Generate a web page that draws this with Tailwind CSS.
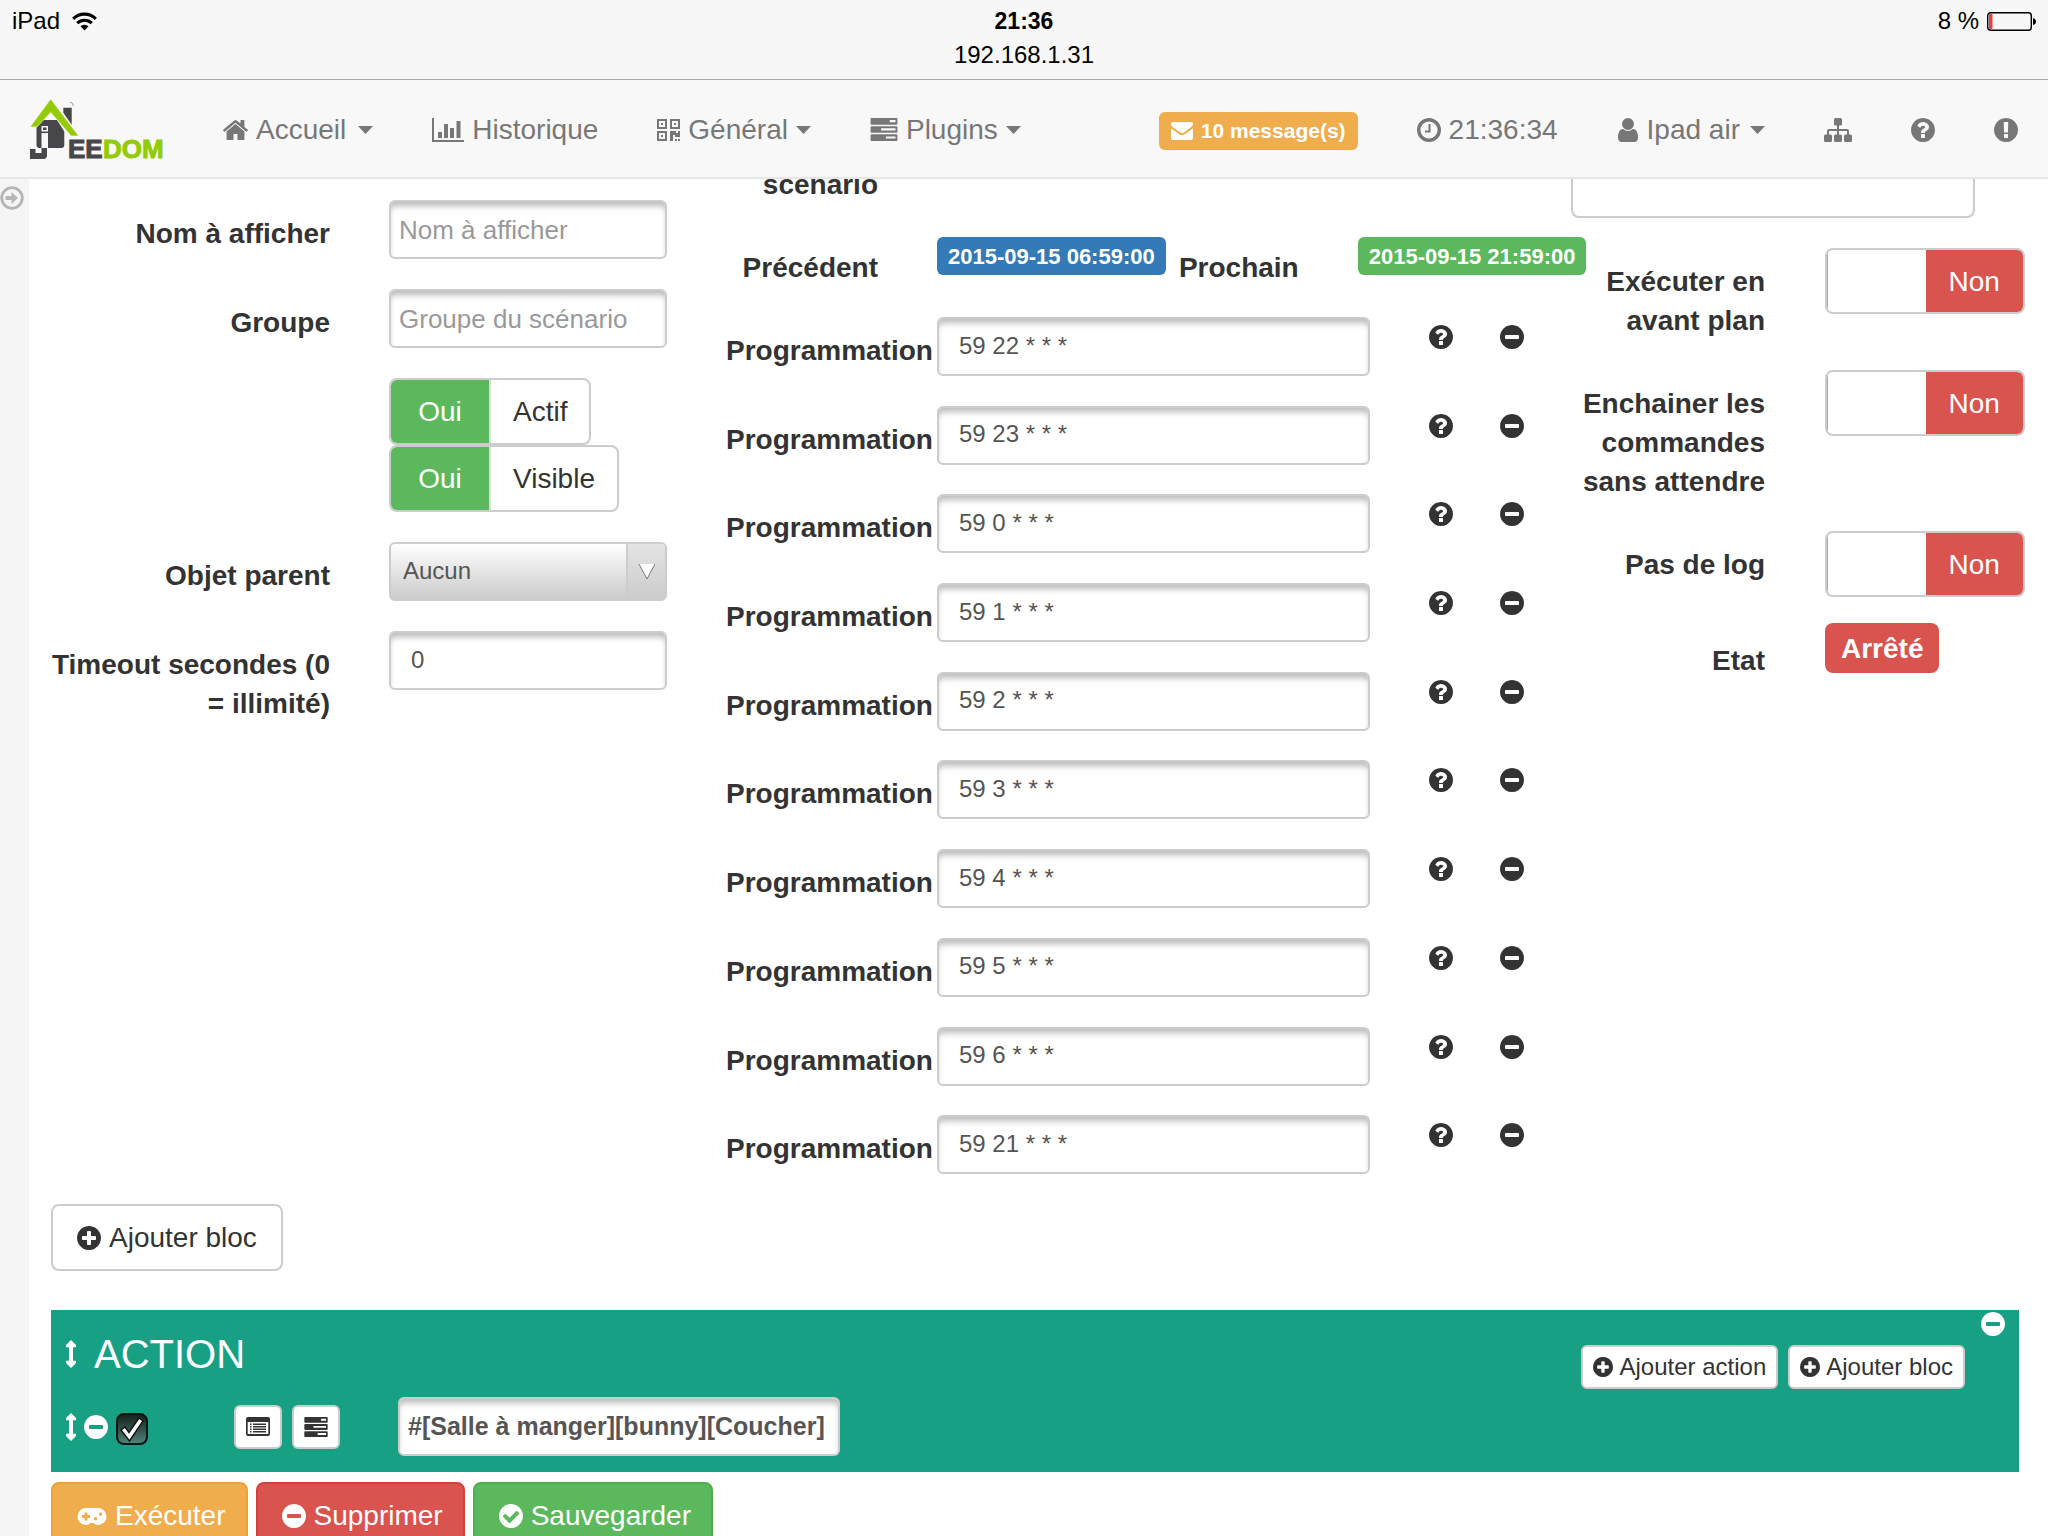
<!DOCTYPE html>
<html lang="fr">
<head>
<meta charset="utf-8">
<meta name="viewport" content="width=device-width, initial-scale=1">
<title>Jeedom - Scénario</title>
<script src="https://cdn.jsdelivr.net/npm/@tailwindcss/browser@4"></script>
</head>
<body class="flex h-screen flex-col overflow-hidden bg-white font-['Liberation_Sans',Arial,sans-serif] text-[28px] leading-[39px] text-[#333]">

<svg class="hidden" aria-hidden="true">
  <symbol id="question" viewBox="128 128 1536 1536"><path d="M1024 1376v-192q0-14-9-23t-23-9h-192q-14 0-23 9t-9 23v192q0 14 9 23t23 9h192q14 0 23-9t9-23zm256-672q0-88-55.5-163t-138.5-116-170-41q-243 0-371 213-15 24 8 42l132 100q7 6 19 6 16 0 25-12 53-68 86-92 34-24 86-24 48 0 85.5 26t37.5 59q0 38-20 61t-68 45q-63 28-115.5 86.5t-52.5 125.5v36q0 14 9 23t23 9h192q14 0 23-9t9-23q0-19 21.5-49.5t54.5-49.5q32-18 49-28.5t46-35 44.5-48 28-60.5 12.5-81zm384 192q0 209-103 385.5t-279.5 279.5-385.5 103-385.5-103-279.5-279.5-103-385.5 103-385.5 279.5-279.5 385.5-103 385.5 103 279.5 279.5 103 385.5z"/></symbol>
  <symbol id="minus" viewBox="128 128 1536 1536"><path d="M1344 960v-128q0-26-19-45t-45-19h-768q-26 0-45 19t-19 45v128q0 26 19 45t45 19h768q26 0 45-19t19-45zm320-64q0 209-103 385.5t-279.5 279.5-385.5 103-385.5-103-279.5-279.5-103-385.5 103-385.5 279.5-279.5 385.5-103 385.5 103 279.5 279.5 103 385.5z"/></symbol>
  <symbol id="plus" viewBox="128 128 1536 1536"><path d="M1344 960v-128q0-26-19-45t-45-19h-256v-256q0-26-19-45t-45-19h-128q-26 0-45 19t-19 45v256h-256q-26 0-45 19t-19 45v128q0 26 19 45t45 19h256v256q0 26 19 45t45 19h128q26 0 45-19t19-45v-256h256q26 0 45-19t19-45zm320-64q0 209-103 385.5t-279.5 279.5-385.5 103-385.5-103-279.5-279.5-103-385.5 103-385.5 279.5-279.5 385.5-103 385.5 103 279.5 279.5 103 385.5z"/></symbol>
  <symbol id="check" viewBox="128 128 1536 1536"><path d="M1412 734q0-28-18-46l-91-90q-19-19-45-19t-45 19l-408 407-226-226q-19-19-45-19t-45 19l-91 90q-18 18-18 46 0 27 18 45l362 362q19 19 45 19 27 0 46-19l543-543q18-18 18-45zm252 162q0 209-103 385.5t-279.5 279.5-385.5 103-385.5-103-279.5-279.5-103-385.5 103-385.5 279.5-279.5 385.5-103 385.5 103 279.5 279.5 103 385.5z"/></symbol>
  <symbol id="exclamation" viewBox="128 128 1536 1536"><path d="M896 128q209 0 385.5 103t279.5 279.5 103 385.5-103 385.5-279.5 279.5-385.5 103-385.5-103-279.5-279.5-103-385.5 103-385.5 279.5-279.5 385.5-103zm128 1247v-190q0-14-9-23.5t-22-9.5h-192q-13 0-23 10t-10 23v190q0 13 10 23t23 10h192q13 0 22-9.5t9-23.5zm-2-344l18-621q0-12-10-18-10-8-24-8h-220q-14 0-24 8-10 6-10 18l17 621q0 10 10 17.5t24 7.5h185q14 0 23.5-7.5t10.5-17.5z"/></symbol>
  <symbol id="user" viewBox="256 128 1280 1536"><path d="M1536 1399q0 109-62.5 187t-150.5 78h-854q-88 0-150.5-78t-62.5-187q0-85 8.5-160.5t31.5-152 58.5-131 94-89 134.5-34.5q131 128 313 128t313-128q76 0 134.5 34.5t94 89 58.5 131 31.5 152 8.5 160.5zm-256-887q0 159-112.5 271.5t-271.5 112.5-271.5-112.5-112.5-271.5 112.5-271.5 271.5-112.5 271.5 112.5 112.5 271.5z"/></symbol>
  <symbol id="home" viewBox="89 255 1614 1281"><path d="M1472 992v480q0 26-19 45t-45 19h-384v-384h-256v384h-384q-26 0-45-19t-19-45v-480q0-1 .5-3t.5-3l575-474 575 474q1 2 1 6zm223-69l-62 74q-8 9-21 11h-3q-13 0-21-7l-692-577-692 577q-12 8-24 7-13-2-21-11l-62-74q-8-10-7-23.5t11-21.5l719-599q32-26 76-26t76 26l244 204v-195q0-14 9-23t23-9h192q14 0 23 9t9 23v408l219 182q10 8 11 21.5t-7 23.5z"/></symbol>
  <symbol id="tasks" viewBox="0 0 28 24"><path fill-rule="evenodd" d="M1 0h26a1 1 0 0 1 1 1v5a1 1 0 0 1-1 1H1a1 1 0 0 1-1-1V1a1 1 0 0 1 1-1zM20 2.2v2.2h6V2.2zM1 8.5h26a1 1 0 0 1 1 1v5a1 1 0 0 1-1 1H1a1 1 0 0 1-1-1v-5a1 1 0 0 1 1-1zM11 10.8V13h15v-2.200zM1 17h26a1 1 0 0 1 1 1v5a1 1 0 0 1-1 1H1a1 1 0 0 1-1-1v-5a1 1 0 0 1 1-1zM16 19.300v2.200h10v-2.200z"/></symbol>
  <symbol id="caret" viewBox="0 0 15 8"><path d="M0 0h15L7.500 8z"/></symbol>
  <symbol id="updown" viewBox="0 0 10 28"><path d="M5 0l5 5v2.300H7v13.400h3V23l-5 5-5-5v-2.300h3V7.300H0V5z"/></symbol>
</svg>

<!-- Barre d'état -->
<div class="grid h-20 shrink-0 grid-cols-3 items-start border-b border-[#a9a9a9] bg-[#f7f7f7] px-3 pt-1 text-2xl leading-[34px] text-black">
  <div class="flex items-center gap-3">
    <span>iPad</span>
    <svg class="h-[19px] w-[25px]" viewBox="0 0 25 19" fill="none" stroke="#000" stroke-width="3.200"><path d="M1.200 6.800a16 16 0 0 1 22.600 0M5.200 11.200a10.500 10.500 0 0 1 14.600 0"/><path d="M12.500 18.500l-4-4.200a5.800 5.800 0 0 1 8 0z" fill="#000" stroke="none"/></svg>
  </div>
  <div class="text-center">
    <div class="text-[23px] font-bold">21:36</div>
    <div>192.168.1.31</div>
  </div>
  <div class="flex items-center justify-end gap-2">
    <span>8 %</span>
    <svg class="h-[19px] w-[49px]" viewBox="0 0 49 19"><rect x=".7" y=".7" width="43.600" height="17.600" rx="3" fill="none" stroke="#000" stroke-width="1.400"/><rect x="2" y="2" width="3.500" height="15" rx="1" fill="#e0433c"/><path d="M46 6q3 1 3 3.500T46 13z"/></svg>
  </div>
</div>

<!-- Navigation -->
<nav class="flex h-[99px] shrink-0 items-center border-b-2 border-[#e7e7e7] bg-[#f8f8f8] px-[30px] pt-0.5 text-[#777]">
  <a href="#" aria-label="Jeedom" class="mr-[57px]">
    <svg class="h-[62px] w-[136px] overflow-visible" viewBox="0 0 136 62">
      <path fill="#47464b" d="M33.300 8.700h8.400v17l-8.400-12zM11 21h16l7.300 11.500V46a3 3 0 0 1-3 3H18V45h-6v4H9.500a3 3 0 0 1-3-3V27z"/>
      <path fill="none" stroke="#999" d="M40 3q4 1 3 4"/>
      <path fill="#f8f8f8" d="M11.500 27h6.500v5.500h-6.500zM11.500 34h6.500v16h-6.500z"/>
      <path fill="#47464b" d="M13 28.500h3.500V31H13zM0 50h5.500v4h6V49H17v8.500L15 60H0z"/>
      <path fill="#93cb06" stroke="#f8f8f8" stroke-width=".6" d="M20.700 0l28 37h-7.500L20.700 13.500 7 28H0z"/>
      <text x="38" y="59" font-family="Liberation Sans" font-size="26" font-weight="bold" fill="#47464b" stroke="#47464b">EE</text>
      <text x="73" y="59" font-family="Liberation Sans" font-size="26" font-weight="bold" fill="#93cb06" stroke="#93cb06">DOM</text>
    </svg>
  </a>
  <div class="flex items-center gap-[59px]">
    <a href="#" class="flex items-center gap-2"><svg class="h-5 w-[25px]" fill="currentColor"><use href="#home"/></svg>Accueil<svg class="ml-1 h-2 w-[15px]" fill="currentColor"><use href="#caret"/></svg></a>
    <a href="#" class="flex items-center gap-2"><svg class="h-6 w-8" viewBox="0 0 32 24" fill="currentColor"><path d="M0 0h2v22h30v2H0zM6 14h4v6H6zM12 6h4v14h-4zM18 10h4v10h-4zM24.500 3h4v17h-4z"/></svg>Historique</a>
    <a href="#" class="flex items-center gap-2"><svg class="h-[22px] w-[23px]" viewBox="0 0 23 22" fill="currentColor"><path fill-rule="evenodd" d="M0 0h10v10H0zM2 2v6h6V2zM13 0h10v10H13zM15 2v6h6V2zM0 12h10v10H0zM2 14v6h6v-6zM4 4h2v2H4zM17 4h2v2h-2zM4 16h2v2H4zM13 12h6v2h2v-2h2v6h-5v-2h-2v6h-3zM18 20h2v2h-2zM21 20h2v2h-2z"/></svg>Général<svg class="h-2 w-[15px]" fill="currentColor"><use href="#caret"/></svg></a>
    <a href="#" class="flex items-center gap-2"><svg class="h-[23px] w-7" fill="currentColor"><use href="#tasks"/></svg>Plugins<svg class="h-2 w-[15px]" fill="currentColor"><use href="#caret"/></svg></a>
  </div>
  <div class="ml-auto flex items-center gap-[59px]">
    <a href="#" class="mt-0.5 flex h-[38px] items-center gap-2 rounded-md bg-[#f0ad4e] px-3 text-[21px] font-bold text-white"><svg class="h-[18px] w-[22px]" viewBox="0 0 22 18" fill="#fff"><path d="M2 0h18a2 2 0 0 1 2 2q0 1.500-1.500 2.800L13 10.500q-2 1.500-4 0L1.500 4.800Q0 3.500 0 2a2 2 0 0 1 2-2zM0 6.200l8 6q3 2.200 6 0l8-6V16a2 2 0 0 1-2 2H2a2 2 0 0 1-2-2z"/></svg>10 message(s)</a>
    <span class="flex items-center gap-2"><svg class="size-6" viewBox="0 0 24 24" fill="none" stroke="currentColor"><circle cx="12" cy="12" r="10.300" stroke-width="3.400"/><path d="M12.500 6v7.500H8" stroke-width="2"/></svg>21:36:34</span>
    <a href="#" class="flex items-center gap-2"><svg class="h-6 w-[22px]" fill="currentColor"><use href="#user"/></svg>Ipad air<svg class="ml-0.5 h-2 w-[15px]" fill="currentColor"><use href="#caret"/></svg></a>
    <a href="#" aria-label="Réseau"><svg class="h-6 w-7" viewBox="0 0 28 24" fill="currentColor"><path d="M11.500 0h5a1.500 1.500 0 0 1 1.500 1.500V6a1.500 1.500 0 0 1-1.500 1.500H15v3.500h8a2 2 0 0 1 2 2v3.500h1.500A1.500 1.500 0 0 1 28 18v4.500a1.500 1.500 0 0 1-1.500 1.500h-5a1.500 1.500 0 0 1-1.500-1.500V18a1.500 1.500 0 0 1 1.500-1.500H23V13h-8v3.500h1.500A1.500 1.500 0 0 1 18 18v4.500a1.500 1.500 0 0 1-1.500 1.500h-5a1.500 1.500 0 0 1-1.500-1.500V18a1.500 1.500 0 0 1 1.500-1.500H13V13H5v3.500h1.500A1.500 1.500 0 0 1 8 18v4.500A1.500 1.500 0 0 1 6.500 24h-5A1.500 1.500 0 0 1 0 22.500V18a1.500 1.500 0 0 1 1.500-1.500H3V13a2 2 0 0 1 2-2h8V7.500h-1.500A1.500 1.500 0 0 1 10 6V1.500A1.500 1.500 0 0 1 11.500 0z"/></svg></a>
    <a href="#" aria-label="Aide"><svg class="size-6" fill="currentColor"><use href="#question"/></svg></a>
    <a href="#" aria-label="Rapport"><svg class="size-6" fill="currentColor"><use href="#exclamation"/></svg></a>
  </div>
</nav>

<div class="flex min-h-0 flex-1 overflow-hidden">
  <aside class="w-[29px] shrink-0 bg-[#f5f5f5] pt-[7px]">
    <button type="button" aria-label="Ouvrir le menu" class="block"><svg class="size-6" viewBox="0 0 24 24"><circle cx="12" cy="12" r="10.300" fill="none" stroke="#b5b5b5" stroke-width="2.800"/><path fill="#b5b5b5" d="M5.500 10h6V6l6.500 6-6.500 6v-4h-6z"/></svg></button>
  </aside>

  <main class="min-w-0 flex-1">
    <form class="grid grid-cols-[minmax(0,686fr)_minmax(0,845fr)_minmax(0,454fr)] pl-[11px] pr-[23px]">

      <!-- Identité du scénario -->
      <div class="flex flex-col gap-[30px] pr-[59px] pt-[21px]">
        <div class="flex gap-[59px]">
          <label for="nom" class="w-[290px] shrink-0 pt-[14px] text-right font-bold">Nom à afficher</label>
          <input id="nom" type="text" placeholder="Nom à afficher" class="h-[59px] min-w-0 flex-1 rounded-md border-2 border-[#ccc] px-2 pt-0.5 text-[26px] shadow-[inset_0_6px_6px_-2px_#bbb] placeholder:text-[#999]">
        </div>
        <div class="flex gap-[59px]">
          <label for="groupe" class="w-[290px] shrink-0 pt-[14px] text-right font-bold">Groupe</label>
          <input id="groupe" type="text" placeholder="Groupe du scénario" class="h-[59px] min-w-0 flex-1 rounded-md border-2 border-[#ccc] px-2 pt-0.5 text-[26px] shadow-[inset_0_6px_6px_-2px_#bbb] placeholder:text-[#999]">
        </div>
        <div class="flex flex-col items-start pl-[349px]">
          <label class="relative flex h-[67px] overflow-hidden rounded-lg border-2 border-[#ccc]"><input type="checkbox" checked class="sr-only"><span class="flex w-[98px] items-center justify-center bg-[#5cb85c] text-white">Oui</span><span class="flex items-center border-l-2 border-[#ddd] px-[22px]">Actif</span></label>
          <label class="relative flex h-[67px] overflow-hidden rounded-lg border-2 border-[#ccc]"><input type="checkbox" checked class="sr-only"><span class="flex w-[98px] items-center justify-center bg-[#5cb85c] text-white">Oui</span><span class="flex items-center border-l-2 border-[#ddd] px-[22px]">Visible</span></label>
        </div>
        <div class="flex gap-[59px]">
          <label for="parent" class="w-[290px] shrink-0 pt-[14px] text-right font-bold">Objet parent</label>
          <div class="grid h-[59px] min-w-0 flex-1 items-stretch">
            <select id="parent" class="col-start-1 row-start-1 appearance-none rounded-md border-2 border-[#ccc] bg-linear-to-b from-white to-[#cbcbcb] px-3 pb-0.5 text-2xl text-[#555]"><option>Aucun</option></select>
            <span class="pointer-events-none col-start-1 row-start-1 m-0.5 flex w-[39px] items-center justify-center justify-self-end rounded-r-sm border-l-2 border-[#ccc] bg-linear-to-b from-[#e4e4e4] to-[#cbcbcb]"><svg class="h-4 w-[18px]" viewBox="0 0 18 16"><path d="M1 0h16L9 15z" fill="#fff"/><path d="M1 0l8 15L17 0" fill="none" stroke="#777"/></svg></span>
          </div>
        </div>
        <div class="flex gap-[59px]">
          <label for="timeout" class="w-[290px] shrink-0 pt-[14px] text-right font-bold">Timeout secondes (0 = illimité)</label>
          <input id="timeout" type="text" value="0" class="h-[59px] min-w-0 flex-1 rounded-md border-2 border-[#ccc] px-5 pb-0.5 text-2xl text-[#555] shadow-[inset_0_6px_6px_-2px_#bbb]">
        </div>
      </div>

      <!-- Programmation -->
      <div>
        <div class="-mt-[14px] mb-[30px] w-[152px] text-right font-bold">scénario</div>
        <div class="mb-[30px] flex whitespace-nowrap">
          <span class="w-[152px] shrink-0 pt-[14px] text-right font-bold">Précédent</span>
          <span class="ml-[59px] mt-[3px] flex h-[38px] shrink-0 items-center rounded-md bg-[#337ab7] px-[11px] text-[22px] font-bold text-white">2015-09-15 06:59:00</span>
          <span class="w-[133px] shrink-0 pt-[14px] text-right font-bold">Prochain</span>
          <span class="ml-[59px] mt-[3px] flex h-[38px] shrink-0 items-center rounded-md bg-[#5cb85c] px-[11px] text-[22px] font-bold text-white">2015-09-15 21:59:00</span>
        </div>
        <div id="schedules" class="grid h-[887px] auto-rows-fr"></div>
      </div>

      <!-- Options -->
      <div class="flex flex-col gap-[30px]">
        <textarea aria-label="Description" class="-mt-[80px] h-[119px] w-[404px] resize-none rounded-lg border-2 border-[#ccc]"></textarea>
        <div class="flex items-start gap-[60px]">
          <label for="avantplan" class="w-[194px] shrink-0 pt-[14px] text-right font-bold">Exécuter en avant plan</label>
          <label class="relative flex h-[66px] flex-1 overflow-hidden rounded-lg border-2 border-[#ccc]"><input id="avantplan" type="checkbox" class="sr-only"><span class="flex-1 border-l border-[#7cc67c]"></span><span class="flex flex-1 items-center justify-center bg-[#d9534f] text-white">Non</span></label>
        </div>
        <div class="flex items-start gap-[60px]">
          <label for="enchainer" class="w-[194px] shrink-0 pt-[14px] text-right font-bold">Enchainer les commandes sans attendre</label>
          <label class="relative flex h-[66px] flex-1 overflow-hidden rounded-lg border-2 border-[#ccc]"><input id="enchainer" type="checkbox" class="sr-only"><span class="flex-1 border-l border-[#7cc67c]"></span><span class="flex flex-1 items-center justify-center bg-[#d9534f] text-white">Non</span></label>
        </div>
        <div class="flex items-start gap-[60px]">
          <label for="paslog" class="w-[194px] shrink-0 pt-[14px] text-right font-bold">Pas de log</label>
          <label class="relative flex h-[66px] flex-1 overflow-hidden rounded-lg border-2 border-[#ccc]"><input id="paslog" type="checkbox" class="sr-only"><span class="flex-1 border-l border-[#7cc67c]"></span><span class="flex flex-1 items-center justify-center bg-[#d9534f] text-white">Non</span></label>
        </div>
        <div class="-mt-1 flex items-start gap-[60px]">
          <span class="w-[194px] shrink-0 pt-[18px] text-right font-bold">Etat</span>
          <span class="flex h-[50px] items-center rounded-lg bg-[#d9534f] px-4 font-bold text-white">Arrêté</span>
        </div>
      </div>
    </form>

    <div class="pl-[22px] pr-[29px]">
      <button type="button" class="flex h-[67px] items-center gap-2 rounded-lg border-2 border-[#ccc] px-6"><svg class="size-6" fill="currentColor"><use href="#plus"/></svg>Ajouter bloc</button>

      <section class="mt-[39px] flex h-[162px] justify-between bg-[#18a085] text-white">
        <div class="pl-[15px] pt-6">
          <h2 class="flex h-10 items-center gap-[18px] text-[40px]"><svg class="h-7 w-[10px]" fill="currentColor"><use href="#updown"/></svg>ACTION</h2>
          <div class="mt-[23px] flex h-[59px] items-center">
            <svg class="h-7 w-[10px]" fill="currentColor"><use href="#updown"/></svg>
            <button type="button" aria-label="Supprimer l'action" class="ml-2"><svg class="size-6" fill="currentColor"><use href="#minus"/></svg></button>
            <span class="ml-2 mt-1 grid size-8">
              <input type="checkbox" checked aria-label="Activer l'action" class="col-start-1 row-start-1 appearance-none rounded-lg border-2 border-[#0b1514] bg-linear-to-b from-[#16231f] to-[#54807a]">
              <svg class="pointer-events-none col-start-1 row-start-1 size-8" viewBox="0 0 32 32"><path d="M5 17l4-3 4 5.500L23 5l4 3-13.500 20z" fill="#fff" stroke="#111" stroke-width="1.500"/></svg>
            </span>
            <button type="button" aria-label="Options" class="ml-[86px] flex h-11 w-12 items-center justify-center rounded-md border-2 border-[#ccc] bg-white text-[#333]"><svg class="h-[19px] w-6" viewBox="0 0 24 19" fill="currentColor"><path fill-rule="evenodd" d="M2 0h20a2 2 0 0 1 2 2v15a2 2 0 0 1-2 2H2a2 2 0 0 1-2-2V2a2 2 0 0 1 2-2zM1.700 5v12h20.600V5zM4 6.500h1.500V8H4zM7 6.500h13V8H7zM4 9h1.500v1.500H4zM7 9h13v1.500H7zM4 11.500h1.500V13H4zM7 11.500h13V13H7zM4 14h1.500v1.500H4zM7 14h13v1.500H7z"/></svg></button>
            <button type="button" aria-label="Commande" class="ml-[10px] flex h-11 w-12 items-center justify-center rounded-md border-2 border-[#ccc] bg-white text-[#333]"><svg class="h-5 w-6" fill="currentColor"><use href="#tasks"/></svg></button>
            <input type="text" aria-label="Commande de l'action" value="#[Salle à manger][bunny][Coucher]" class="ml-[58px] h-[59px] w-[442px] rounded-md border-2 border-[#ccc] bg-white px-2 text-[25px] font-bold text-[#555] shadow-[inset_0_6px_6px_-2px_#bbb]">
          </div>
        </div>
        <div class="flex items-start text-2xl text-[#333]">
          <button type="button" class="mt-[35px] flex h-11 items-center gap-1.5 rounded-md border-2 border-[#ccc] bg-white px-[10px]"><svg class="size-5" fill="currentColor"><use href="#plus"/></svg>Ajouter action</button>
          <button type="button" class="ml-[10px] mt-[35px] flex h-11 items-center gap-1.5 rounded-md border-2 border-[#ccc] bg-white px-[10px]"><svg class="size-5" fill="currentColor"><use href="#plus"/></svg>Ajouter bloc</button>
          <button type="button" aria-label="Supprimer le bloc" class="ml-4 mr-[14px] mt-0.5 text-white"><svg class="size-6" fill="currentColor"><use href="#minus"/></svg></button>
        </div>
      </section>

      <div class="mt-[10px] flex gap-2 text-white">
        <button type="button" class="flex h-[67px] items-center gap-2 rounded-lg border-2 border-[#eea236] bg-[#f0ad4e] pl-6 pr-5"><svg class="h-[18px] w-[30px]" viewBox="0 0 30 18" fill="#fff"><path fill-rule="evenodd" d="M9 1h12a8.500 8.500 0 0 1 0 17q-3 0-4.500-2h-3Q12 18 9 18A8.500 8.500 0 0 1 9 1zM7.500 5.500v2.500H5v3h2.500v2.500h3V11H13V8h-2.500V5.500zM18.500 10a1.700 1.700 0 1 0 .1 3.400 1.700 1.700 0 0 0-.1-3.400zM23.500 5.500a1.700 1.700 0 1 0 .1 3.400 1.700 1.700 0 0 0-.1-3.400z"/></svg>Exécuter</button>
        <button type="button" class="flex h-[67px] items-center gap-2 rounded-lg border-2 border-[#d43f3a] bg-[#d9534f] pl-6 pr-5"><svg class="size-6" fill="currentColor"><use href="#minus"/></svg>Supprimer</button>
        <button type="button" class="flex h-[67px] items-center gap-2 rounded-lg border-2 border-[#4cae4c] bg-[#5cb85c] pl-6 pr-5"><svg class="size-6" fill="currentColor"><use href="#check"/></svg>Sauvegarder</button>
      </div>
    </div>
  </main>
</div>

<script>
  const crons = ['59 22 * * *', '59 23 * * *', '59 0 * * *', '59 1 * * *', '59 2 * * *', '59 3 * * *', '59 4 * * *', '59 5 * * *', '59 6 * * *', '59 21 * * *'];
  document.getElementById('schedules').innerHTML = crons.map((cron, i) => `
    <div class="flex items-start">
      <label for="cron${i}" class="w-[152px] shrink-0 pt-[14px] whitespace-nowrap font-bold">Programmation</label>
      <input id="cron${i}" type="text" value="${cron}" class="ml-[59px] h-[59px] min-w-0 flex-1 rounded-md border-2 border-[#ccc] px-5 pb-0.5 text-2xl text-[#555] shadow-[inset_0_6px_6px_-2px_#bbb]">
      <button type="button" aria-label="Aide" class="ml-[59px] mt-2"><svg class="size-6" fill="currentColor"><use href="#question"/></svg></button>
      <button type="button" aria-label="Supprimer" class="ml-[47px] mr-[47px] mt-2"><svg class="size-6" fill="currentColor"><use href="#minus"/></svg></button>
    </div>`).join('');
</script>
</body>
</html>
